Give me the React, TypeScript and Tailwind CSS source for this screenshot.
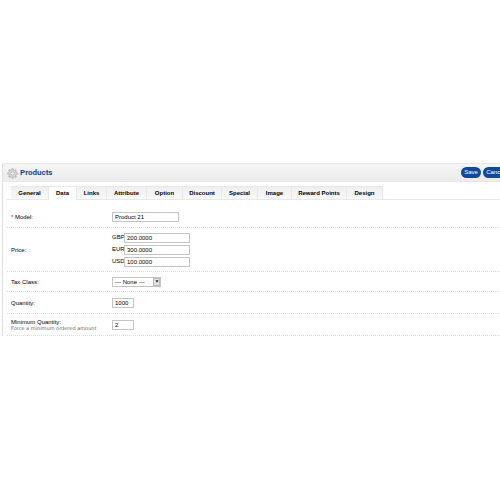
import { useState } from "react";
import type { ReactNode } from "react";

const TABS = [
  { name: "General", width: "w-[38px]" },
  { name: "Data", width: "w-[28px]" },
  { name: "Links", width: "w-[30px]" },
  { name: "Attribute", width: "w-[40px]" },
  { name: "Option", width: "w-[36px]" },
  { name: "Discount", width: "w-[39px]" },
  { name: "Special", width: "w-[36px]" },
  { name: "Image", width: "w-[34px]" },
  { name: "Reward Points", width: "w-[55px]" },
  { name: "Design", width: "w-[36px]" },
];

const PRICES = [
  { currency: "GBP", value: "200.0000" },
  { currency: "EUR", value: "300.0000" },
  { currency: "USD", value: "100.0000" },
];

const FIELD =
  "h-[10px] border border-[#c4c4c4] bg-white px-[2px] text-[6px] leading-[8px] text-black outline-none";

const TEETH = [0, 45, 90, 135, 180, 225, 270, 315];

function GearIcon() {
  return (
    <svg viewBox="0 0 22 22" className="h-[11px] w-[11px] shrink-0" aria-hidden="true">
      {TEETH.map((angle) => (
        <rect
          key={angle}
          x="8.6"
          y="0.5"
          width="4.8"
          height="5"
          rx="1"
          fill="#c0c0c0"
          transform={`rotate(${angle} 11 11)`}
        />
      ))}
      <circle cx="11" cy="11" r="7.6" fill="#dcdcdc" stroke="#b8b8b8" strokeWidth="1.4" />
      <circle cx="11" cy="11" r="3.6" fill="#f2f2f2" stroke="#acacac" strokeWidth="1.4" />
    </svg>
  );
}

function Row({
  label,
  htmlFor,
  height,
  children,
}: {
  label: ReactNode;
  htmlFor?: string;
  height: string;
  children: ReactNode;
}) {
  return (
    <div className={`flex items-center border-b border-dotted border-[#dedede] pl-1 ${height}`}>
      <label htmlFor={htmlFor} className="w-[101px] shrink-0 leading-[6px]">
        {label}
      </label>
      {children}
    </div>
  );
}

export default function App() {
  const [activeTab, setActiveTab] = useState("Data");

  return (
    <div className="overflow-hidden bg-white pt-[163px] pb-40 font-['Liberation_Sans',sans-serif] text-[6px] text-black">
      <div className="ml-[2px] border-l border-[#dedede]">
        {/* Heading */}
        <header className="-mr-2 flex h-[19px] items-center justify-between rounded-tl-[3px] border-y border-[#e8e8e8] bg-linear-to-b from-[#f5f5f5] to-[#ebebeb] pl-1">
          <h1 className="flex items-center gap-[2px] pt-px font-['Roboto','Liberation_Sans',sans-serif] text-[8px] leading-[12px] font-bold text-[#1a4a94]">
            <GearIcon />
            Products
          </h1>
          <div className="flex gap-[2px]">
            <button className="h-[11px] w-[20px] rounded-full bg-[#104a98] text-[6px] leading-[11px] text-white">
              Save
            </button>
            <button className="h-[11px] w-[25px] rounded-full bg-[#104a98] text-[6px] leading-[11px] text-white">
              Cancel
            </button>
          </div>
        </header>

        {/* Tabs */}
        <nav className="mt-1 ml-1 flex h-[14px] border-b border-[#e8e8e8] pl-1">
          {TABS.map((tab) => (
            <button
              key={tab.name}
              onClick={() => setActiveTab(tab.name)}
              className={`shrink-0 border-t border-r border-[#e8e8e8] text-[6px] leading-[12px] font-bold whitespace-nowrap text-black ${tab.width} ${
                activeTab === tab.name
                  ? "-mb-px bg-white pb-px"
                  : "bg-linear-to-b from-[#efefef] to-[#f9f9f9]"
              }`}
            >
              {tab.name}
            </button>
          ))}
        </nav>

        {/* Form */}
        <form className="pt-[6px] pl-1">
          <Row
            htmlFor="model"
            height="h-[22px]"
            label={
              <>
                <span className="text-red-600">*</span> Model:
              </>
            }
          >
            <input id="model" defaultValue="Product 21" className={`w-[67px] ${FIELD}`} />
          </Row>

          <Row label="Price:" htmlFor="price-GBP" height="h-[44px]">
            <div className="flex flex-col gap-[2px]">
              {PRICES.map((p) => (
                <div key={p.currency} className="flex items-center">
                  <label htmlFor={`price-${p.currency}`} className="w-[12px]">
                    {p.currency}
                  </label>
                  <input
                    id={`price-${p.currency}`}
                    defaultValue={p.value}
                    className={`w-[66px] ${FIELD}`}
                  />
                </div>
              ))}
            </div>
          </Row>

          <Row label="Tax Class:" htmlFor="tax" height="h-[20px]">
            <div className="relative">
              <select id="tax" className={`block w-[49px] appearance-none ${FIELD}`}>
                <option>--- None ---</option>
              </select>
              <span className="pointer-events-none absolute inset-y-px right-px flex w-[7px] items-center justify-center border border-[#bbb] bg-[#e2e2e2]">
                <svg viewBox="0 0 4 3" className="h-[3px] w-[4px]">
                  <path d="M0.3 0.3h3.4L2 2.7z" fill="#333" />
                </svg>
              </span>
            </div>
          </Row>

          <Row label="Quantity:" htmlFor="quantity" height="h-[22px]">
            <input id="quantity" defaultValue="1000" className={`w-[22px] ${FIELD}`} />
          </Row>

          <Row
            htmlFor="minimum"
            height="h-[22px]"
            label={
              <>
                Minimum Quantity:
                <span className="block font-['DejaVu_Sans',sans-serif] text-[5px] whitespace-nowrap text-[#666]">
                  Force a minimum ordered amount
                </span>
              </>
            }
          >
            <input id="minimum" defaultValue="2" className={`w-[22px] ${FIELD}`} />
          </Row>
        </form>
      </div>
    </div>
  );
}
